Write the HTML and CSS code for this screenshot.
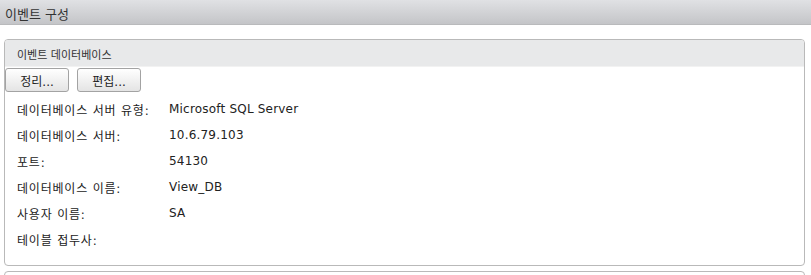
FILE: index.html
```html
<!DOCTYPE html>
<html lang="ko">
<head>
  <meta charset="UTF-8">
  <title>이벤트 구성</title>
  <link rel="stylesheet" href="styles.css">
</head>
<body>
  <div class="header">이벤트 구성</div>
  <div class="panel">
    <div class="panel-title">이벤트 데이터베이스</div>
    <div class="toolbar">
      <button class="btn">정리...</button>
      <button class="btn">편집...</button>
    </div>
    <div class="rows">
      <div class="row"><span class="label">데이터베이스 서버 유형:</span><span class="value">Microsoft SQL Server</span></div>
      <div class="row"><span class="label">데이터베이스 서버:</span><span class="value">10.6.79.103</span></div>
      <div class="row"><span class="label">포트:</span><span class="value">54130</span></div>
      <div class="row"><span class="label">데이터베이스 이름:</span><span class="value">View_DB</span></div>
      <div class="row"><span class="label">사용자 이름:</span><span class="value">SA</span></div>
      <div class="row"><span class="label">테이블 접두사:</span><span class="value"></span></div>
    </div>
  </div>
  <div class="panel next"></div>
</body>
</html>
```
FILE: styles.css
```css
body {
  margin: 0;
  background-color: #ffffff;
  font-family: "DejaVu Sans", "Noto Sans CJK KR", sans-serif;
  color: #222;
}
.header {
  height: 25px;
  box-sizing: border-box;
  padding: 4px 5px 0;
  font-size: 13px;
  color: #333;
  background: linear-gradient(to bottom, #e0e1e4, #c4c5c8);
  border-bottom: 1px solid #b9babc;
}
.panel {
  margin: 14px 6px 0 4px;
  border: 1px solid #b9b9b9;
  border-radius: 4px;
  padding-bottom: 13px;
}
.panel.next {
  margin-top: 5px;
  height: 20px;
  padding: 0;
}
.panel-title {
  height: 27px;
  box-sizing: border-box;
  padding: 6px 12px 0;
  font-size: 11px;
  color: #333;
  background-color: #e8e9ea;
  border-bottom: 1px solid #f2f2f2;
  border-radius: 3px 3px 0 0;
}
.toolbar {
  display: flex;
  gap: 8px;
  margin-top: 1px;
}
.btn {
  width: 64px;
  height: 24px;
  border: 1px solid #a3a3a3;
  border-radius: 3px;
  background: linear-gradient(to bottom, #ffffff, #e4e4e4);
  font-family: "DejaVu Sans", "Noto Sans CJK KR", sans-serif;
  font-size: 12px;
  color: #222;
  padding: 0;
}
.rows {
  margin-top: 4px;
}
.row {
  display: flex;
  height: 26px;
  align-items: center;
  padding-left: 12px;
  font-size: 12px;
}
.label {
  width: 152px;
  letter-spacing: 0.8px;
}
.value {
  letter-spacing: 0.2px;
}
```
